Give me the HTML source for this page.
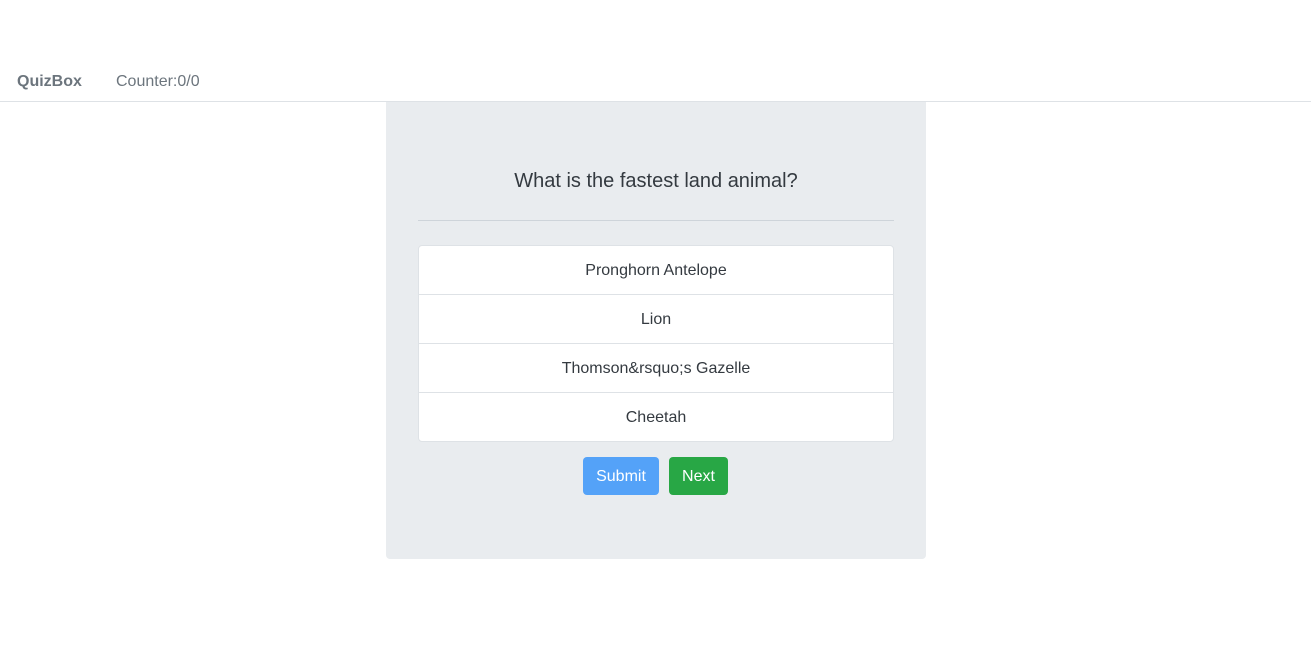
<!DOCTYPE html>
<html><head><style>
body{margin:0;font-family:"Liberation Sans",sans-serif;background:#fff;color:#212529;width:1311px;height:656px;overflow:hidden}
.nav{position:absolute;top:60px;left:0;right:0;height:41px;border-bottom:1px solid #dee2e6}
.brand{position:absolute;left:17px;top:13px;font-weight:bold;font-size:16px;color:#6c757d}
.cnt{position:absolute;left:116px;top:13px;font-size:16px;color:#6c757d}
.card{position:absolute;left:386px;top:102px;width:540px;height:457px;background:#e9ecef;border-radius:0 0 4px 4px}
.q{position:absolute;top:68px;left:0;right:0;text-align:center;font-size:20px;color:#343a40}
.hr{position:absolute;top:118px;left:32px;width:476px;border-top:1px solid #ced4da}
.list{position:absolute;top:143px;left:32px;width:474px;background:#fff;border:1px solid #dee2e6;border-radius:4px}
.item{height:48px;line-height:50px;text-align:center;font-size:16px;color:#343a40;border-top:1px solid #dee2e6}
.item:first-child{border-top:none}
.btn{position:absolute;top:355px;height:38px;line-height:40px;color:#fff;font-size:16px;border-radius:4px;text-align:center}
</style></head><body>
<div class="nav"><span class="brand">QuizBox</span><span class="cnt">Counter:0/0</span></div>
<div class="card">
<div class="q">What is the fastest land animal?</div>
<div class="hr"></div>
<div class="list">
<div class="item">Pronghorn Antelope</div>
<div class="item">Lion</div>
<div class="item">Thomson&amp;rsquo;s Gazelle</div>
<div class="item">Cheetah</div>
</div>
<div class="btn" style="left:197px;width:76px;background:#54a2f8">Submit</div>
<div class="btn" style="left:283px;width:59px;background:#28a745">Next</div>
</div>
</body></html>
